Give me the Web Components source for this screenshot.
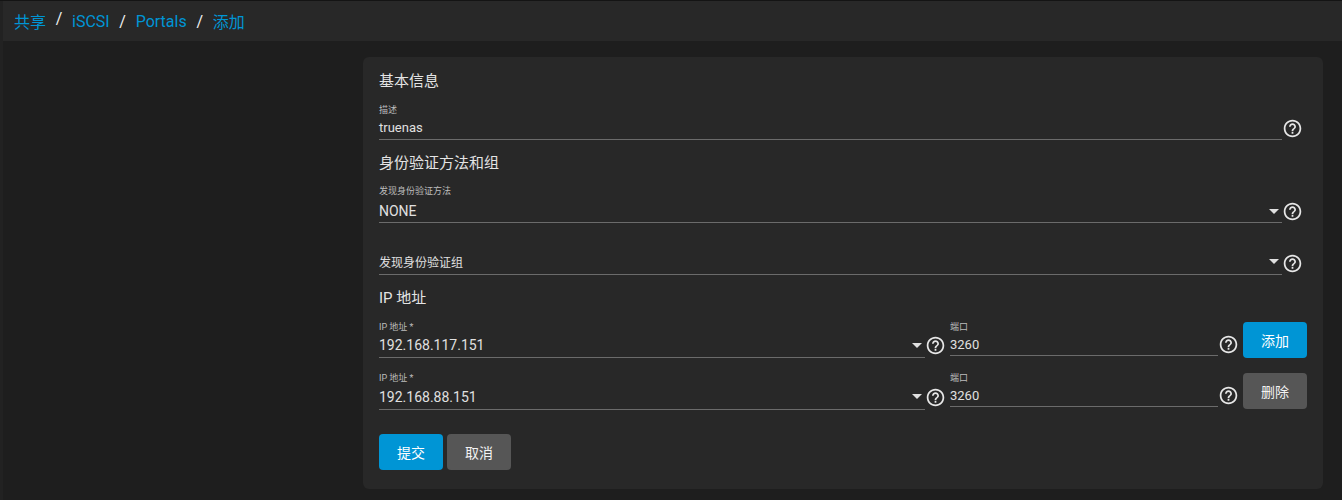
<!DOCTYPE html>
<html lang="zh">
<head>
<meta charset="utf-8">
<title>Portals</title>
<style>
    html, body { margin: 0; height: 100%; background: #1e1e1e; overflow: hidden; }
    body { font-family: Roboto, "Noto Sans CJK SC", sans-serif; color: #e0e0e0; }
    .val-ip { font-size: 14px; }
</style>
</head>
<body>
<app-shell>
    <crumb-bar slot="top">
        <crumb-link>共享</crumb-link>
        <crumb-link>iSCSI</crumb-link>
        <crumb-link>Portals</crumb-link>
        <crumb-link last>添加</crumb-link>
    </crumb-bar>
    <form-card>
        <form-heading>基本信息</form-heading>
        <field-row style="--top:15px">
            <form-field style="--h:23px" label="描述">truenas</form-field>
            <help-icon style="--top:13px"></help-icon>
        </field-row>
        <form-heading style="--top:15px">身份验证方法和组</form-heading>
        <field-row style="--top:14px">
            <form-field style="--h:22px;--gap:3px;--size:14px" label="发现身份验证方法" select>NONE</form-field>
            <help-icon style="--top:15px"></help-icon>
        </field-row>
        <field-row style="--top:25px">
            <form-field style="--h:26px;--size:12px" select>发现身份验证组</form-field>
            <help-icon style="--top:5px"></help-icon>
        </field-row>
        <form-heading style="--top:15px">IP 地址</form-heading>
        <portal-row style="--top:15px">
            <form-field style="--h:24px;--size:14px" label="IP 地址 *" select>192.168.117.151</form-field>
            <help-icon style="--top:13px"></help-icon>
            <form-field style="--h:22px" label="端口">3260</form-field>
            <help-icon style="--top:12px"></help-icon>
            <action-button primary>添加</action-button>
        </portal-row>
        <portal-row style="--top:15px">
            <form-field style="--h:25px;--size:14px" label="IP 地址 *" select>192.168.88.151</form-field>
            <help-icon style="--top:14px"></help-icon>
            <form-field style="--h:22px" label="端口">3260</form-field>
            <help-icon style="--top:12px"></help-icon>
            <action-button>删除</action-button>
        </portal-row>
        <button-row>
            <action-button primary>提交</action-button>
            <action-button>取消</action-button>
        </button-row>
    </form-card>
</app-shell>

<script>
    // small helper, every element below just has a template string
    function shadow(el, html) {
        el.attachShadow({ mode: "open" }).innerHTML = html;
    }

    class AppShell extends HTMLElement {
        constructor() {
            super();
            shadow(this, `
                <style>
                    :host {
                        display: grid;
                        grid-template-columns: 3px 1fr;
                        height: 100vh;
                        border-top: 1px solid #141414;
                        box-sizing: border-box;
                    }
                    .rail { background: #222222; }
                    .main { display: flex; flex-direction: column; min-width: 0; }
                    .content { padding: 16px 19px 0 360px; }
                </style>
                <div class="rail"></div>
                <div class="main">
                    <slot name="top"></slot>
                    <div class="content"><slot></slot></div>
                </div>
            `);
        }
    }

    class CrumbBar extends HTMLElement {
        constructor() {
            super();
            shadow(this, `
                <style>
                    :host {
                        display: flex;
                        align-items: center;
                        height: 40px;
                        padding-left: 11px;
                        background: #282828;
                        font-size: 16px;
                    }
                </style>
                <slot></slot>
            `);
        }
    }

    class CrumbLink extends HTMLElement {
        constructor() {
            super();
            shadow(this, `
                <style>
                    :host { display: inline-flex; color: #0095d5; white-space: nowrap; }
                    .sep { color: #f0f0f0; width: 26px; text-align: center; }
                    :host([last]) .sep { display: none; }
                </style>
                <slot></slot><span class="sep">/</span>
            `);
        }
    }

    class FormCard extends HTMLElement {
        constructor() {
            super();
            shadow(this, `
                <style>
                    :host {
                        display: block;
                        background: #282828;
                        border-radius: 6px;
                        padding: 16px 16px 19px;
                    }
                </style>
                <slot></slot>
            `);
        }
    }

    class FormHeading extends HTMLElement {
        constructor() {
            super();
            shadow(this, `
                <style>
                    :host {
                        display: block;
                        margin-top: var(--top, 0);
                        font-size: 15px;
                        line-height: 17px;
                        color: #e4e4e4;
                    }
                </style>
                <slot></slot>
            `);
        }
    }

    class FieldRow extends HTMLElement {
        constructor() {
            super();
            shadow(this, `
                <style>
                    :host {
                        display: grid;
                        grid-template-columns: 1fr 25px;
                        margin-top: var(--top, 0);
                    }
                </style>
                <slot></slot>
            `);
        }
    }

    class PortalRow extends HTMLElement {
        constructor() {
            super();
            shadow(this, `
                <style>
                    :host {
                        display: grid;
                        grid-template-columns: 1fr 25px 268px 25px 64px;
                        align-items: start;
                        margin-top: var(--top, 0);
                    }
                </style>
                <slot></slot>
            `);
        }
    }

    class FormField extends HTMLElement {
        constructor() {
            super();
            const label = this.getAttribute("label");
            shadow(this, `
                <style>
                    :host { display: block; min-width: 0; }
                    .label {
                        font-size: 9px;
                        line-height: 11px;
                        color: #bdbdbd;
                        margin-bottom: var(--gap, 0);
                    }
                    .value {
                        display: flex;
                        align-items: center;
                        justify-content: space-between;
                        height: var(--h, 23px);
                        border-bottom: 1px solid #6b6b6b;
                        font-size: var(--size, 13px);
                        color: #e0e0e0;
                    }
                    .arrow {
                        width: 0;
                        height: 0;
                        margin-right: 3px;
                        border-left: 5px solid transparent;
                        border-right: 5px solid transparent;
                        border-top: 5px solid #e0e0e0;
                    }
                </style>
                ${label ? `<div class="label">${label}</div>` : ""}
                <div class="value">
                    <span><slot></slot></span>
                    ${this.hasAttribute("select") ? `<span class="arrow"></span>` : ""}
                </div>
            `);
        }
    }

    class HelpIcon extends HTMLElement {
        constructor() {
            super();
            shadow(this, `
                <style>
                    :host { display: block; margin-top: var(--top, 0); height: 21px; }
                    svg { display: block; width: 21px; height: 21px; fill: #e6e6e6; }
                </style>
                <svg viewBox="0 0 24 24"><path d="M11 18h2v-2h-2v2zm1-16C6.48 2 2 6.48 2 12s4.48 10 10 10 10-4.48 10-10S17.52 2 12 2zm0 18c-4.41 0-8-3.59-8-8s3.59-8 8-8 8 3.59 8 8-3.59 8-8 8zm0-14c-2.21 0-4 1.79-4 4h2c0-1.1.9-2 2-2s2 .9 2 2c0 2-3 1.75-3 5h2c0-2.25 3-2.5 3-5 0-2.21-1.79-4-4-4z"/></svg>
            `);
        }
    }

    class ActionButton extends HTMLElement {
        constructor() {
            super();
            shadow(this, `
                <style>
                    :host {
                        display: flex;
                        align-items: center;
                        justify-content: center;
                        width: 64px;
                        height: 36px;
                        border-radius: 4px;
                        background: #565656;
                        color: #f2f2f2;
                        font-size: 14px;
                    }
                    :host([primary]) { background: #0095d5; color: #ffffff; }
                </style>
                <slot></slot>
            `);
        }
    }

    class ButtonRow extends HTMLElement {
        constructor() {
            super();
            shadow(this, `
                <style>
                    :host { display: flex; gap: 4px; margin-top: 24px; }
                </style>
                <slot></slot>
            `);
        }
    }

    customElements.define("app-shell", AppShell);
    customElements.define("crumb-bar", CrumbBar);
    customElements.define("crumb-link", CrumbLink);
    customElements.define("form-card", FormCard);
    customElements.define("form-heading", FormHeading);
    customElements.define("field-row", FieldRow);
    customElements.define("portal-row", PortalRow);
    customElements.define("form-field", FormField);
    customElements.define("help-icon", HelpIcon);
    customElements.define("action-button", ActionButton);
    customElements.define("button-row", ButtonRow);
</script>
</body>
</html>
